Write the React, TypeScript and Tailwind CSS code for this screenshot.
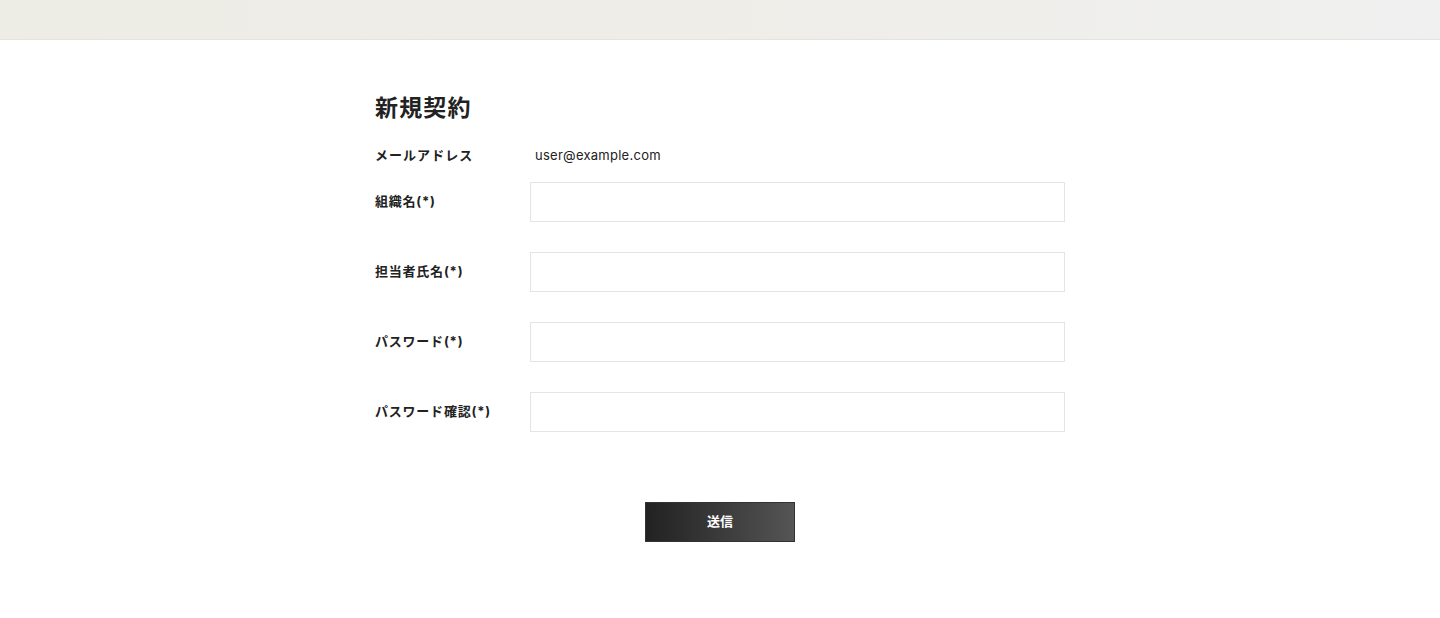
export default function App() {
  const fields = ['組織名(*)', '担当者氏名(*)', 'パスワード(*)', 'パスワード確認(*)']

  return (
    <div
      className="min-h-screen bg-white text-[#222]"
      style={{ fontFamily: 'Inter, "Noto Sans CJK JP", sans-serif' }}
    >
      {/* Header bar */}
      <div className="h-10 border-b border-[#e3e3e0] bg-gradient-to-r from-[#edece5] via-[#eeede8] to-[#f0f0f0]" />

      <main className="mx-auto w-[690px] pt-[52px]">
        <h1 className="text-[23px] font-bold leading-8 tracking-[0.05em]">新規契約</h1>

        {/* Email */}
        <div className="mt-[19px] flex h-[26px] items-center">
          <div className="w-[155px] text-[13px] font-bold tracking-[0.08em]">メールアドレス</div>
          <div className="pl-[5px] text-[13px] tracking-[0.02em]">user@example.com</div>
        </div>

        {/* Inputs */}
        <div className="mt-[13px] flex flex-col gap-[30px]">
          {fields.map((label) => (
            <div key={label} className="flex items-center">
              <label className="w-[155px] text-[13px] font-bold tracking-[0.06em]">{label}</label>
              <input
                type={label.startsWith('パスワード') ? 'password' : 'text'}
                className="h-10 w-[535px] border border-[#e4e4e2] bg-white px-[5px] text-[13px] outline-none"
              />
            </div>
          ))}
        </div>

        <div className="mt-[70px] flex justify-center">
          <button className="h-10 w-[150px] border border-[#333] bg-gradient-to-r from-[#222] to-[#555] text-[13px] font-bold text-white">
            送信
          </button>
        </div>
      </main>
    </div>
  )
}
